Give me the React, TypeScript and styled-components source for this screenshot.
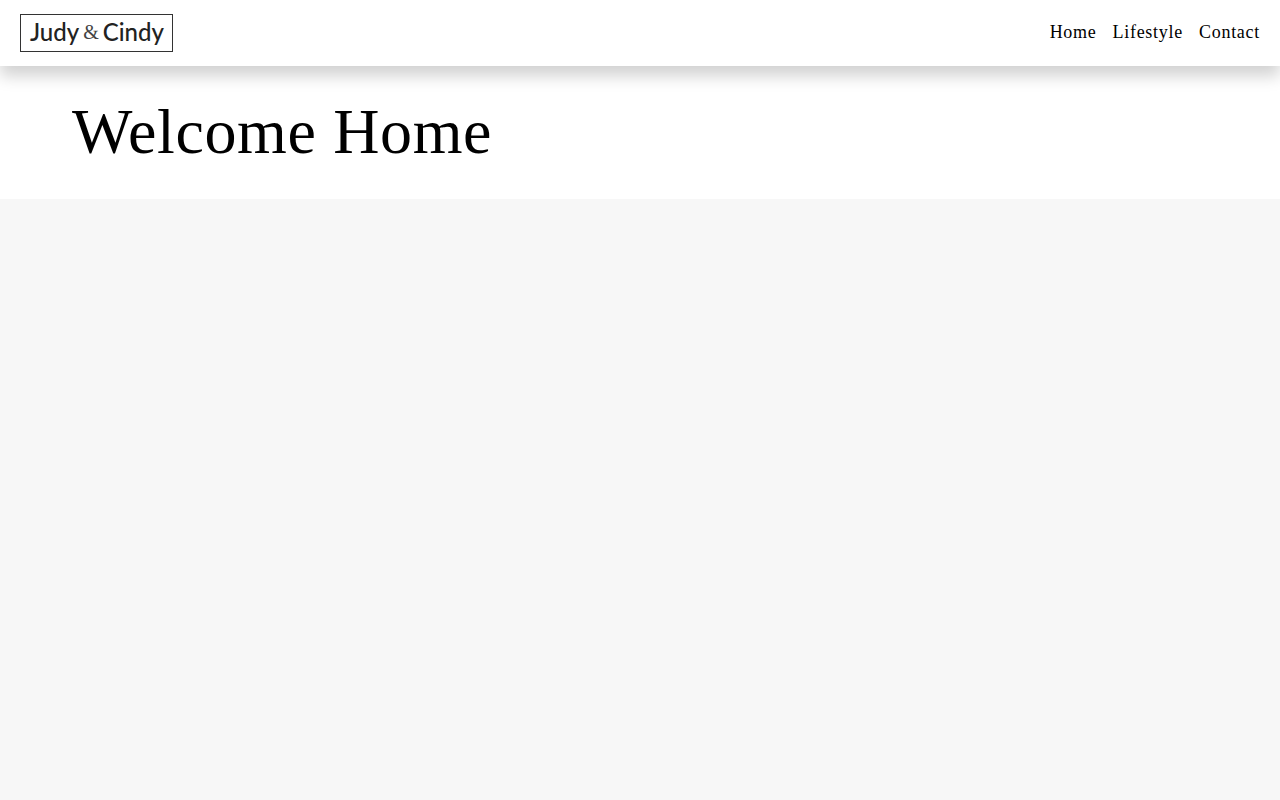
import React from "react";
import styled, { createGlobalStyle } from "styled-components";

const GlobalStyle = createGlobalStyle`
  * {
    box-sizing: border-box;
  }

  body {
    margin: 0;
    background: #f7f7f7;
    color: #000;
    font-family: "Liberation Serif", "Times New Roman", serif;
  }
`;

const Header = styled.header`
  position: relative;
  display: flex;
  align-items: center;
  justify-content: space-between;
  padding: 14px 20px;
  background: #fff;
  box-shadow: 0 10px 15px rgba(0, 0, 0, 0.18);
`;

const Logo = styled.a`
  display: flex;
  align-items: center;
  gap: 4px;
  height: 38px;
  padding: 0 8px 2px 9px;
  border: 1px solid #333;
  color: #222;
  font-family: Lato, "Liberation Sans", sans-serif;
  font-size: 24px;
  font-weight: 500;
  line-height: 28px;
  text-decoration: none;
`;

const Ampersand = styled.span`
  color: #444;
  font-family: "Liberation Serif", serif;
  font-size: 20px;
  font-weight: 400;
`;

const Nav = styled.nav`
  display: flex;
  gap: 16px;
  padding-bottom: 2px;
`;

const NavLink = styled.a`
  color: #000;
  font-size: 18px;
  line-height: 22px;
  letter-spacing: 0.04em;
  text-decoration: none;
`;

const Hero = styled.main`
  padding: 24px 72px 26px;
  background: #fff;
`;

const Title = styled.h1`
  margin: 0;
  font-size: 64px;
  font-weight: 400;
  line-height: 83px;
  letter-spacing: 0.01em;
`;

const links = ["Home", "Lifestyle", "Contact"];

export default function App() {
  return (
    <>
      <GlobalStyle />
      <Header>
        <Logo href="#home">
          <span>Judy</span>
          <Ampersand>&amp;</Ampersand>
          <span>Cindy</span>
        </Logo>
        <Nav aria-label="Main">
          {links.map((label) => (
            <NavLink key={label} href={`#${label.toLowerCase()}`}>
              {label}
            </NavLink>
          ))}
        </Nav>
      </Header>
      <Hero>
        <Title>Welcome Home</Title>
      </Hero>
    </>
  );
}
